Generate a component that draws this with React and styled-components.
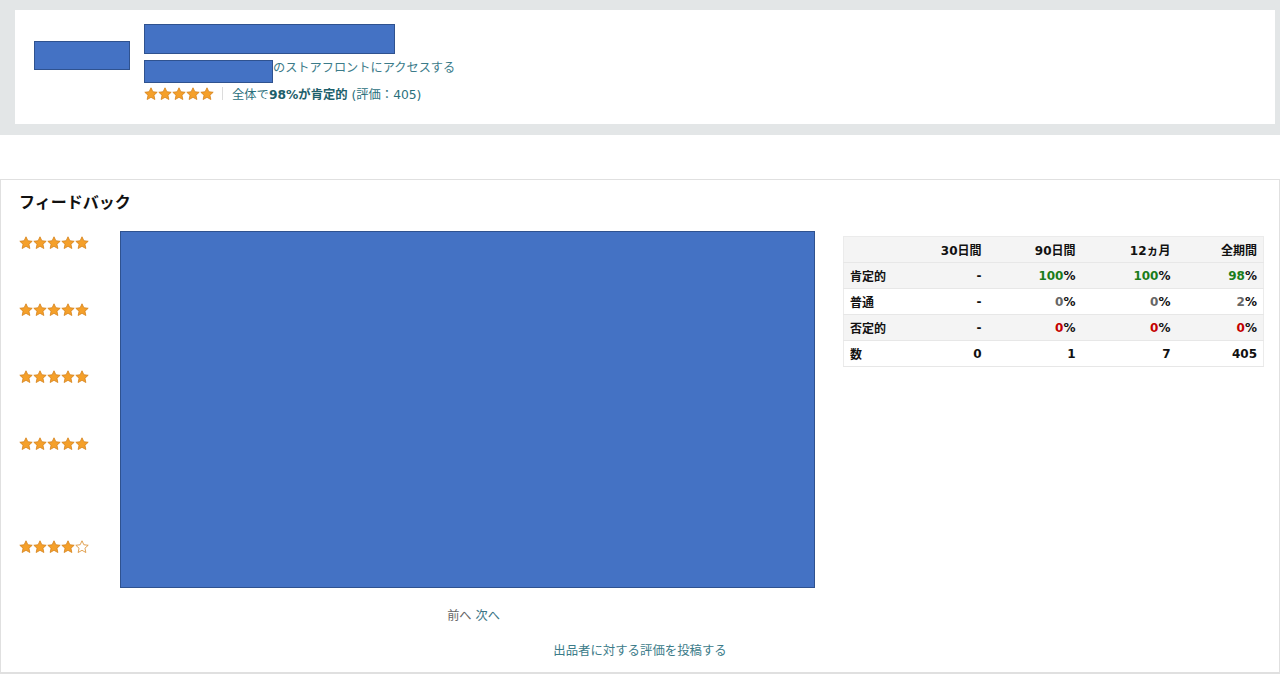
import React from "react";
import styled, { createGlobalStyle } from "styled-components";

const GlobalStyle = createGlobalStyle`
  html, body { margin: 0; padding: 0; background: #ffffff; }
  body {
    font-family: "DejaVu Sans", "Noto Sans CJK JP", sans-serif;
    font-size: 12px;
    color: #111;
  }
  * { box-sizing: border-box; }
`;

const Page = styled.div`
  width: 1280px;
`;

const TopBand = styled.div`
  background: #e3e6e7;
  height: 135px;
  padding: 10px 5px 0 15px;
`;

const SellerCard = styled.div`
  background: #ffffff;
  height: 114px;
  display: flex;
  align-items: flex-start;
  padding: 14px 19px;
  gap: 14px;
`;

const Redacted = styled.div`
  width: ${(p) => p.$w}px;
  height: ${(p) => p.$h}px;
  margin-top: ${(p) => p.$mt || 0}px;
  background: #4472c4;
  border: 1px solid #2f528f;
  flex-shrink: 0;
`;

const SellerInfo = styled.div`
  display: flex;
  flex-direction: column;
`;

const StoreLine = styled.div`
  display: flex;
  align-items: flex-start;
  margin-top: 6px;
`;

const StoreText = styled.span`
  font-size: 12.2px;
  line-height: 17px;
  color: #3b7b89;
`;

const RatingLine = styled.div`
  display: flex;
  align-items: center;
  margin-top: 2px;
  height: 17px;
`;

const Divider = styled.span`
  width: 1px;
  height: 13px;
  background: #dcdcdc;
  margin: 0 9px 0 8px;
`;

const RatingText = styled.span`
  font-size: 12.3px;
  color: #2a6f7c;
  b { font-weight: bold; color: #1d5f6b; }
`;

const StarsWrap = styled.span`
  display: inline-flex;
  gap: ${(p) => p.$gap || 0}px;
`;

const FeedbackBox = styled.div`
  margin-top: 44px;
  border: 1px solid #e0e0e0;
  border-bottom-width: 2px;
  height: 495px;
  padding: 12px 0 0 0;
`;

const Title = styled.h2`
  margin: 0 0 18px 18px;
  font-size: 16px;
  line-height: 21px;
  font-weight: bold;
  color: #111;
`;

const Content = styled.div`
  display: flex;
  align-items: flex-start;
  padding-left: 18px;
`;

const StarColumn = styled.div`
  width: 101px;
  display: flex;
  flex-direction: column;
  padding-top: 5px;
`;

const StarRow = styled.div`
  height: 14px;
  margin-top: ${(p) => p.$mt || 0}px;
  display: flex;
`;

const ChartColumn = styled.div`
  width: 695px;
  display: flex;
  flex-direction: column;
  align-items: center;
`;

const Chart = styled.div`
  width: 695px;
  height: 357px;
  background: #4472c4;
  border: 1px solid #2f528f;
`;

const Pager = styled.div`
  margin-top: 19px;
  padding-left: 12px;
  font-size: 12.2px;
  line-height: 18px;
  display: flex;
  gap: 4px;
`;

const PagerItem = styled.span`
  color: ${(p) => (p.$link ? "#3b7585" : "#666")};
`;

const TableWrap = styled.div`
  margin-left: 28px;
  margin-top: 5px;
`;

const Table = styled.table`
  border-collapse: collapse;
  table-layout: fixed;
  width: 420px;
  font-size: 12px;
  font-weight: bold;
  border: 1px solid #ebebeb;
`;

const Row = styled.tr`
  height: 26px;
  background: ${(p) => (p.$shade ? "#f4f4f4" : "#ffffff")};
  border-bottom: 1px solid #e7e7e7;
`;

const HeadCell = styled.th`
  text-align: right;
  padding: 0 6px;
  font-weight: bold;
  width: ${(p) => p.$w}px;
  color: #111;
`;

const LabelCell = styled.td`
  text-align: left;
  padding: 0 6px;
  color: #111;
  white-space: nowrap;
`;

const ValueCell = styled.td`
  text-align: right;
  padding: 0 6px;
  color: #111;
`;

const Num = styled.span`
  color: ${(p) =>
    p.$tone === "green" ? "#1b7d1b" : p.$tone === "red" ? "#c40000" : p.$tone === "gray" ? "#666" : "#111"};
`;

const PostLink = styled.div`
  text-align: center;
  margin-top: 17px;
  font-size: 12.4px;
  line-height: 18px;
  color: #3b7b89;
`;

const STAR_PATH =
  "M7 0.8 L8.85 4.75 L13.2 5.25 L9.95 8.2 L10.85 12.5 L7 10.3 L3.15 12.5 L4.05 8.2 L0.8 5.25 L5.15 4.75 Z";

function Star({ filled = true, size = 14 }) {
  return (
    <svg width={size} height={size} viewBox="0 0 14 14">
      <path
        d={STAR_PATH}
        fill={filled ? "#f5a02a" : "#ffffff"}
        stroke={filled ? "#d4821a" : "#d98a28"}
        strokeWidth="0.8"
        strokeLinejoin="round"
      />
    </svg>
  );
}

function Stars({ count = 5, size = 14, gap = 0 }) {
  return (
    <StarsWrap $gap={gap}>
      {[0, 1, 2, 3, 4].map((i) => (
        <Star key={i} filled={i < count} size={size} />
      ))}
    </StarsWrap>
  );
}

const rows = [
  { label: "肯定的", shade: true, values: [["-", null], ["100", "green"], ["100", "green"], ["98", "green"]] },
  { label: "普通", shade: false, values: [["-", null], ["0", "gray"], ["0", "gray"], ["2", "gray"]] },
  { label: "否定的", shade: true, values: [["-", null], ["0", "red"], ["0", "red"], ["0", "red"]] },
  { label: "数", shade: false, values: [["0", "plain"], ["1", "plain"], ["7", "plain"], ["405", "plain"]], count: true },
];

const starRows = [
  { count: 5, mt: 0 },
  { count: 5, mt: 53 },
  { count: 5, mt: 53 },
  { count: 5, mt: 53 },
  { count: 4, mt: 89 },
];

export default function App() {
  return (
    <Page>
      <GlobalStyle />
      <TopBand>
        <SellerCard>
          <Redacted $w={96} $h={29} $mt={17} />
          <SellerInfo>
            <Redacted $w={251} $h={30} />
            <StoreLine>
              <Redacted $w={129} $h={23} />
              <StoreText>のストアフロントにアクセスする</StoreText>
            </StoreLine>
            <RatingLine>
              <Stars count={5} size={14} gap={-0.3} />
              <Divider />
              <RatingText>
                全体で<b>98%が肯定的</b> (評価：405)
              </RatingText>
            </RatingLine>
          </SellerInfo>
        </SellerCard>
      </TopBand>

      <FeedbackBox>
        <Title>フィードバック</Title>
        <Content>
          <StarColumn>
            {starRows.map((r, i) => (
              <StarRow key={i} $mt={r.mt}>
                <Stars count={r.count} />
              </StarRow>
            ))}
          </StarColumn>
          <ChartColumn>
            <Chart />
            <Pager>
              <PagerItem>前へ</PagerItem>
              <PagerItem $link>次へ</PagerItem>
            </Pager>
          </ChartColumn>
          <TableWrap>
            <Table>
              <thead>
                <Row $shade>
                  <HeadCell $w={44}></HeadCell>
                  <HeadCell $w={100}>30日間</HeadCell>
                  <HeadCell $w={94}>90日間</HeadCell>
                  <HeadCell $w={95}>12ヵ月</HeadCell>
                  <HeadCell $w={87}>全期間</HeadCell>
                </Row>
              </thead>
              <tbody>
                {rows.map((r) => (
                  <Row key={r.label} $shade={r.shade}>
                    <LabelCell>{r.label}</LabelCell>
                    {r.values.map(([v, tone], j) => (
                      <ValueCell key={j}>
                        {tone === null ? (
                          "-"
                        ) : r.count ? (
                          v
                        ) : (
                          <>
                            <Num $tone={tone}>{v}</Num>%
                          </>
                        )}
                      </ValueCell>
                    ))}
                  </Row>
                ))}
              </tbody>
            </Table>
          </TableWrap>
        </Content>
        <PostLink>出品者に対する評価を投稿する</PostLink>
      </FeedbackBox>
    </Page>
  );
}
